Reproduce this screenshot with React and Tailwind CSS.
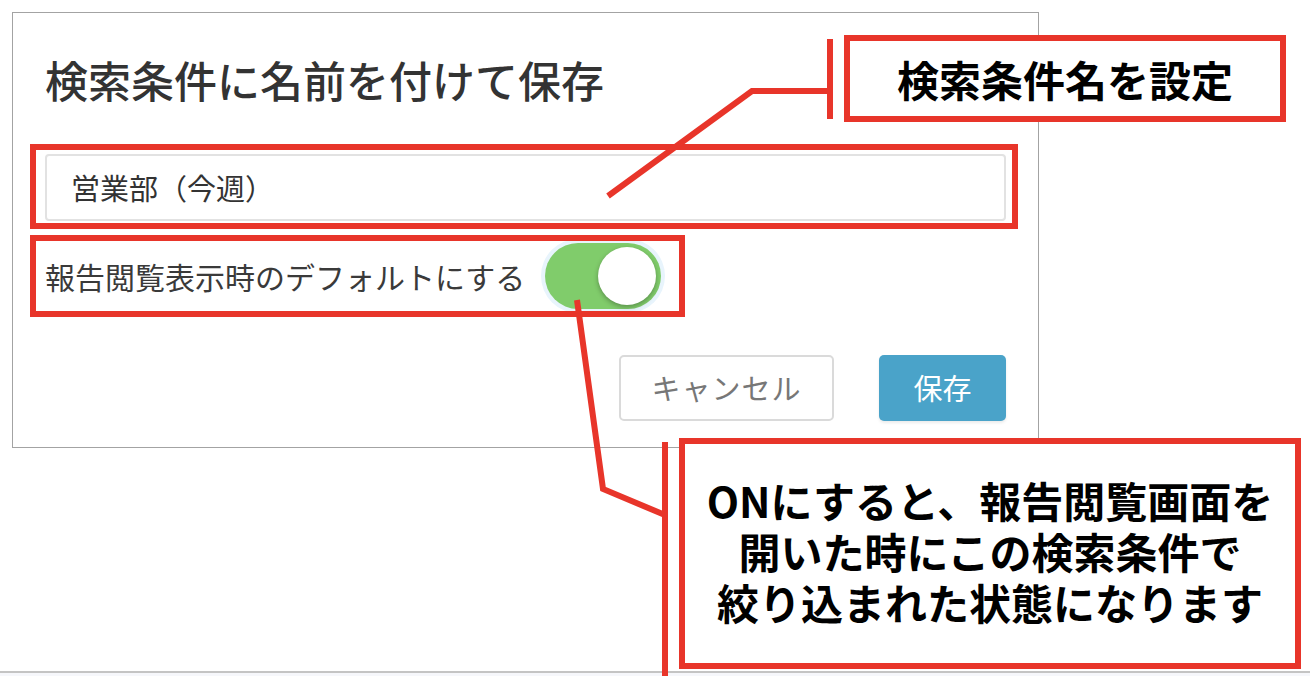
export default function App() {
  const red = "#e8352a";
  return (
    <div className="relative w-[1310px] h-[676px] bg-white overflow-hidden font-['Noto_Sans_CJK_JP','Noto_Sans',sans-serif]">
      {/* Dialog */}
      <div className="ml-[12px] mt-[12px] w-[1027px] h-[436px] border border-[#a3a3a3] px-[32px] pt-[41px] flex flex-col">
        <h2 className="text-[43px] leading-[50px] font-medium text-[#333]">
          検索条件に名前を付けて保存
        </h2>
        <div className="mt-[50px] h-[67px] rounded-[4px] border-2 border-[#e2e2e2] pl-[24px] flex items-center text-[29px] text-[#333]">
          営業部（今週）
        </div>
        <div className="mt-[21px] h-[68px] flex items-center gap-[20px]">
          <span className="text-[30px] text-[#3a3a3a]">報告閲覧表示時のデフォルトにする</span>
          <div className="relative w-[116px] h-[66px] rounded-full bg-[#80cc6b] ring-4 ring-[#e8f4fc]">
            <div className="absolute right-[5px] top-[4px] w-[58px] h-[58px] rounded-full bg-white shadow-[0_2px_5px_rgba(0,0,0,0.3)]" />
          </div>
        </div>
        <div className="mt-[45px] flex justify-end gap-[45px]">
          <button className="w-[215px] h-[66px] rounded-[5px] border-2 border-[#dadada] bg-white text-[29px] text-[#777] tracking-[1px]">
            キャンセル
          </button>
          <button className="w-[127px] h-[66px] rounded-[5px] bg-[#4aa3c9] text-[29px] text-white shadow-[0_2px_3px_rgba(0,0,0,0.08)]">
            保存
          </button>
        </div>
      </div>

      {/* bottom rule */}
      <div className="absolute left-0 right-0 top-[671px] h-[2px] bg-[#c4c4c4]" />
      <div className="absolute left-0 right-0 top-[673px] h-[3px] bg-[#f6f7fb]" />

      {/* Annotation frames around controls */}
      <div className="absolute left-[30px] top-[144px] w-[988px] h-[85px] border-[6px] border-[#e8352a]" />
      <div className="absolute left-[30px] top-[235px] w-[655px] h-[82px] border-[6px] border-[#e8352a]" />

      {/* Callout 1 */}
      <div className="absolute left-[844px] top-[35px] w-[442px] h-[87px] border-[6px] border-[#e8352a] bg-white flex items-center justify-center text-[42px] font-bold text-black leading-none">
        検索条件名を設定
      </div>

      {/* Callout 2 */}
      <div className="absolute left-[679px] top-[438px] w-[622px] h-[231px] border-[6px] border-[#e8352a] bg-white flex flex-col items-center justify-center text-[42px] font-bold text-black pb-[6px]">
        <div className="h-[51px] leading-[51px]">ONにすると、報告閲覧画面を</div>
        <div className="h-[51px] leading-[51px]">開いた時にこの検索条件で</div>
        <div className="h-[51px] leading-[51px]">絞り込まれた状態になります</div>
      </div>

      {/* Leader lines */}
      <svg className="absolute left-0 top-0 pointer-events-none" width="1310" height="676" viewBox="0 0 1310 676">
        <polyline points="830,91 752,91 608,196" fill="none" stroke={red} strokeWidth="6" strokeLinejoin="miter" />
        <line x1="830" y1="39" x2="830" y2="119" stroke={red} strokeWidth="6" />
        <polyline points="577,300 603,489 665,515" fill="none" stroke={red} strokeWidth="6" strokeLinejoin="miter" />
        <line x1="665" y1="442" x2="665" y2="676" stroke={red} strokeWidth="6" />
      </svg>
    </div>
  );
}
